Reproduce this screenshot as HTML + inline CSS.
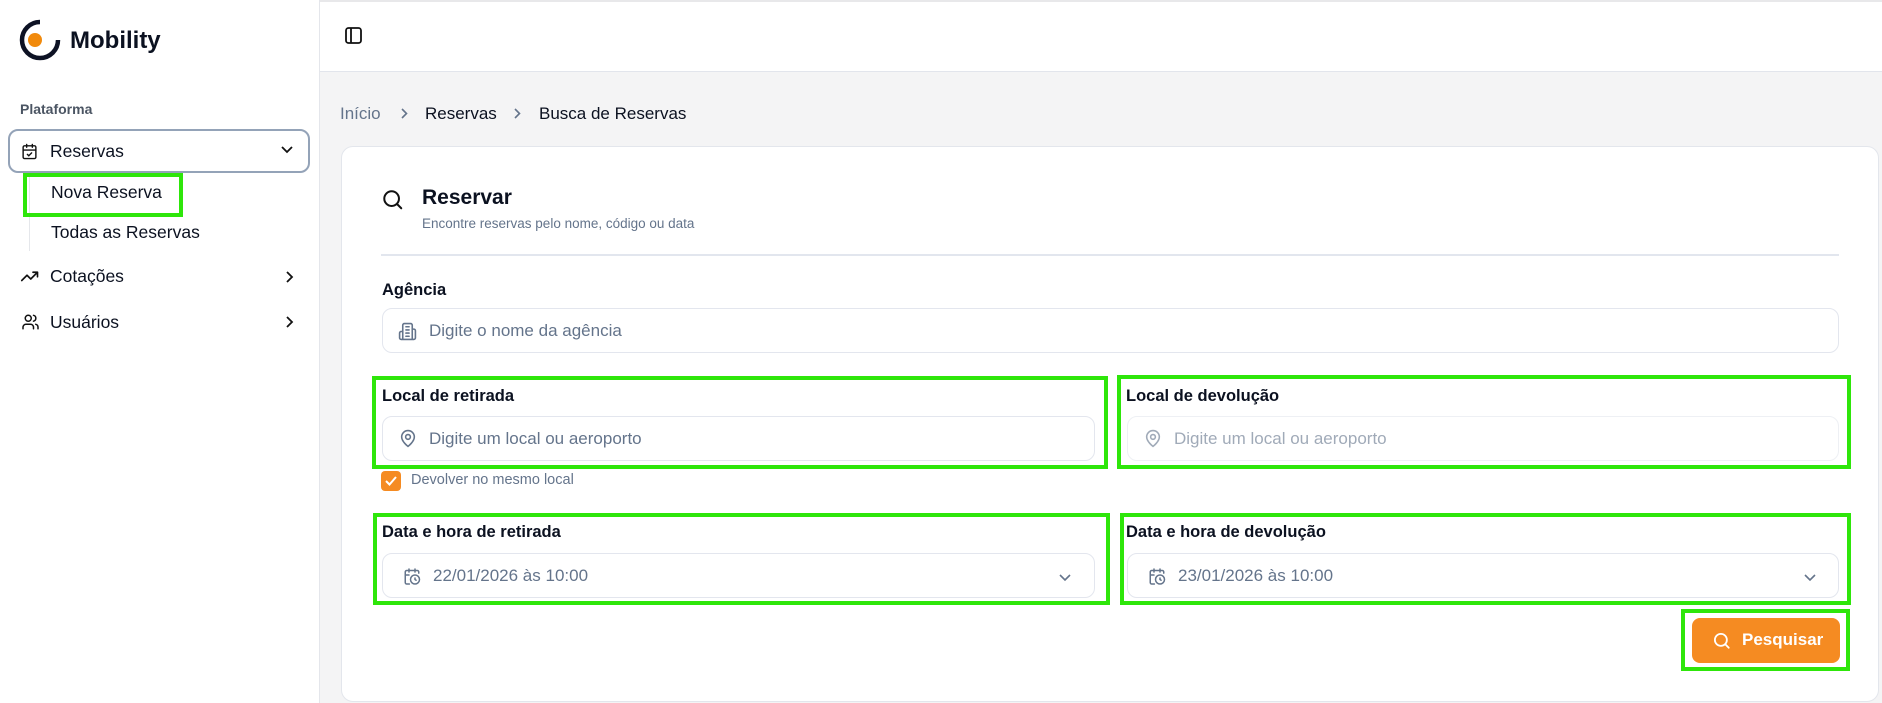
<!DOCTYPE html>
<html><head><meta charset="utf-8"><style>
*{box-sizing:border-box;margin:0;padding:0}
html,body{width:1882px;height:703px;overflow:hidden}
body{background:#f4f4f5;font-family:"Liberation Sans",sans-serif;color:#0b1120;position:relative}
.abs{position:absolute}
.side{left:0;top:0;width:320px;height:703px;background:#fff;border-right:1px solid #e4e6eb}
.hdr{left:320px;top:0;width:1562px;height:72px;background:#fff;border-bottom:1px solid #e2e5ec;border-top:2px solid #e8e8ea}
.t{position:absolute;white-space:nowrap}
.card{left:341px;top:146px;width:1538px;height:556px;background:#fff;border:1px solid #e3e6ec;border-radius:12px}
.inp{position:absolute;height:45px;border:1px solid #e3e6ee;border-radius:10px;background:#fff}
.lbl{position:absolute;font-size:16.5px;font-weight:bold;color:#0b1120;white-space:nowrap}
.ph{position:absolute;font-size:17px;color:#64748b;white-space:nowrap;top:12px}
.g{position:absolute;border:4px solid #2ee60a}
svg{position:absolute;overflow:visible}
</style></head><body>
<div class="abs side"></div>
<div class="abs hdr"></div>

<svg style="left:19px;top:19px" width="42" height="42" viewBox="0 0 42 42">
<path d="M21 3 A18 18 0 1 0 39 21" fill="none" stroke="#0d1224" stroke-width="4.5"/>
<circle cx="16" cy="21" r="7" fill="#f18a0c"/>
</svg>
<div class="t" style="left:70px;top:27px;font-size:24px;font-weight:bold">Mobility</div>
<div class="t" style="left:20px;top:101px;font-size:14px;color:#4b5563;font-weight:bold">Plataforma</div>

<div class="abs" style="left:8px;top:129px;width:302px;height:44px;border:2px solid #94a3b8;border-radius:10px"></div>
<svg style="left:21px;top:143px" width="17" height="17" viewBox="0 0 24 24" fill="none" stroke="#111" stroke-width="2" stroke-linecap="round"><rect x="3" y="4" width="18" height="18" rx="2"/><path d="M16 2v4M8 2v4M3 10h18M9 16l2 2 4-4"/></svg>
<div class="t" style="left:50px;top:141px;font-size:17.5px">Reservas</div>
<svg style="left:281px;top:146px" width="12" height="8" viewBox="0 0 12 8" fill="none" stroke="#111" stroke-width="1.8"><path d="M1 1l5 5 5-5"/></svg>
<div class="abs" style="left:29px;top:173px;width:1px;height:78px;background:#e5e7eb"></div>
<div class="t" style="left:51px;top:182px;font-size:17.5px">Nova Reserva</div>
<div class="t" style="left:51px;top:222px;font-size:17.5px">Todas as Reservas</div>
<div class="g" style="left:23px;top:173px;width:160px;height:44px"></div>

<svg style="left:21px;top:270px" width="18" height="12" viewBox="0 0 24 16" fill="none" stroke="#111" stroke-width="2.2" stroke-linecap="round" stroke-linejoin="round"><path d="M1 14l7-7 5 5 9-9M16 3h6v6"/></svg>
<div class="t" style="left:50px;top:266px;font-size:17.5px">Cotações</div>
<svg style="left:286px;top:271px" width="7" height="12" viewBox="0 0 7 12" fill="none" stroke="#111" stroke-width="1.8"><path d="M1 1l5 5-5 5"/></svg>
<svg style="left:21px;top:313px" width="19" height="18" viewBox="0 0 24 24" fill="none" stroke="#111" stroke-width="2" stroke-linecap="round"><circle cx="9" cy="7" r="4"/><path d="M2 21v-2a4 4 0 0 1 4-4h6a4 4 0 0 1 4 4v2M16 3.1a4 4 0 0 1 0 7.8M22 21v-2a4 4 0 0 0-3-3.9"/></svg>
<div class="t" style="left:50px;top:312px;font-size:17.5px">Usuários</div>
<svg style="left:286px;top:316px" width="7" height="12" viewBox="0 0 7 12" fill="none" stroke="#111" stroke-width="1.8"><path d="M1 1l5 5-5 5"/></svg>

<svg style="left:345px;top:27px" width="17" height="17" viewBox="0 0 17 17" fill="none" stroke="#111" stroke-width="1.8"><rect x="1" y="1" width="15" height="15" rx="2.5"/><path d="M6 1v15"/></svg>

<div class="t" style="left:340px;top:104px;font-size:17px;color:#64748b">Início</div>
<svg style="left:401px;top:108px" width="7" height="11" viewBox="0 0 7 11" fill="none" stroke="#64748b" stroke-width="1.6"><path d="M1 1l4.5 4.5L1 10"/></svg>
<div class="t" style="left:425px;top:104px;font-size:17px">Reservas</div>
<svg style="left:514px;top:108px" width="7" height="11" viewBox="0 0 7 11" fill="none" stroke="#64748b" stroke-width="1.6"><path d="M1 1l4.5 4.5L1 10"/></svg>
<div class="t" style="left:539px;top:104px;font-size:17px">Busca de Reservas</div>

<div class="abs card"></div>

<svg style="left:382px;top:189px" width="22" height="22" viewBox="0 0 24 24" fill="none" stroke="#111" stroke-width="2.2" stroke-linecap="round"><circle cx="10.5" cy="10.5" r="8"/><path d="M21 21l-4.5-4.5"/></svg>
<div class="t" style="left:422px;top:186px;font-size:21px;font-weight:bold">Reservar</div>
<div class="t" style="left:422px;top:216px;font-size:13.5px;color:#64748b">Encontre reservas pelo nome, código ou data</div>
<div class="abs" style="left:381px;top:254px;width:1458px;height:2px;background:#e2e6ee"></div>

<div class="lbl" style="left:382px;top:281px">Agência</div>
<div class="inp" style="left:382px;top:308px;width:1457px">
<svg style="left:15px;top:13px" width="19" height="19" viewBox="0 0 24 24" fill="none" stroke="#64748b" stroke-width="2" stroke-linecap="round"><path d="M6 22V4a2 2 0 0 1 2-2h8a2 2 0 0 1 2 2v18zM6 12H4a2 2 0 0 0-2 2v6a2 2 0 0 0 2 2h2M18 9h2a2 2 0 0 1 2 2v9a2 2 0 0 1-2 2h-2M10 6h4M10 10h4M10 14h4M10 18h4"/></svg>
<div class="ph" style="left:46px">Digite o nome da agência</div></div>

<div class="lbl" style="left:382px;top:387px">Local de retirada</div>
<div class="inp" style="left:382px;top:416px;width:713px">
<svg style="left:17px;top:12px" width="16" height="19" viewBox="0 0 20 24" fill="none" stroke="#64748b" stroke-width="2"><path d="M18 10c0 6-8 12-8 12S2 16 2 10a8 8 0 0 1 16 0z"/><circle cx="10" cy="10" r="3"/></svg>
<div class="ph" style="left:46px">Digite um local ou aeroporto</div></div>
<div class="g" style="left:372px;top:376px;width:736px;height:93px"></div>

<div class="lbl" style="left:1126px;top:387px">Local de devolução</div>
<div class="inp" style="left:1127px;top:416px;width:712px;border-color:#eef0f4">
<svg style="left:17px;top:12px" width="16" height="19" viewBox="0 0 20 24" fill="none" stroke="#a0aab8" stroke-width="2"><path d="M18 10c0 6-8 12-8 12S2 16 2 10a8 8 0 0 1 16 0z"/><circle cx="10" cy="10" r="3"/></svg>
<div class="ph" style="left:46px;color:#a0aab8">Digite um local ou aeroporto</div></div>
<div class="g" style="left:1117px;top:375px;width:734px;height:94px"></div>

<div class="abs" style="left:381px;top:471px;width:20px;height:20px;background:#f58b22;border-radius:4px"></div>
<svg style="left:385px;top:476px" width="12" height="10" viewBox="0 0 12 10" fill="none" stroke="#fff" stroke-width="2"><path d="M1 5l3.5 3.5L11 1"/></svg>
<div class="t" style="left:411px;top:472px;font-size:14.5px;color:#64748b">Devolver no mesmo local</div>

<div class="lbl" style="left:382px;top:523px">Data e hora de retirada</div>
<div class="inp" style="left:382px;top:553px;width:713px">
<svg style="left:20px;top:13px" width="18" height="19" viewBox="0 0 24 24" fill="none" stroke="#64748b" stroke-width="2" stroke-linecap="round"><path d="M21 7.5V6a2 2 0 0 0-2-2H5a2 2 0 0 0-2 2v14a2 2 0 0 0 2 2h3.5M16 2v4M8 2v4M3 10h5"/><circle cx="16" cy="16" r="6"/><path d="M16 14v2l1.5 1"/></svg>
<div class="ph" style="left:50px">22/01/2026 às 10:00</div>
<svg style="left:676px;top:20px" width="12" height="7" viewBox="0 0 12 7" fill="none" stroke="#64748b" stroke-width="1.6"><path d="M1 1l5 5 5-5"/></svg></div>
<div class="g" style="left:373px;top:513px;width:737px;height:92px"></div>

<div class="lbl" style="left:1126px;top:523px">Data e hora de devolução</div>
<div class="inp" style="left:1127px;top:553px;width:712px">
<svg style="left:20px;top:13px" width="18" height="19" viewBox="0 0 24 24" fill="none" stroke="#64748b" stroke-width="2" stroke-linecap="round"><path d="M21 7.5V6a2 2 0 0 0-2-2H5a2 2 0 0 0-2 2v14a2 2 0 0 0 2 2h3.5M16 2v4M8 2v4M3 10h5"/><circle cx="16" cy="16" r="6"/><path d="M16 14v2l1.5 1"/></svg>
<div class="ph" style="left:50px">23/01/2026 às 10:00</div>
<svg style="left:676px;top:20px" width="12" height="7" viewBox="0 0 12 7" fill="none" stroke="#64748b" stroke-width="1.6"><path d="M1 1l5 5 5-5"/></svg></div>
<div class="g" style="left:1120px;top:513px;width:731px;height:92px"></div>

<div class="abs" style="left:1692px;top:618px;width:148px;height:45px;background:#f58b22;border-radius:8px"></div>
<svg style="left:1713px;top:632px" width="18" height="18" viewBox="0 0 24 24" fill="none" stroke="#fff" stroke-width="2.4" stroke-linecap="round"><circle cx="10.5" cy="10.5" r="8"/><path d="M21 21l-4.5-4.5"/></svg>
<div class="t" style="left:1742px;top:630px;font-size:17px;font-weight:bold;color:#fff">Pesquisar</div>
<div class="g" style="left:1681px;top:609px;width:169px;height:62px"></div>
</body></html>
